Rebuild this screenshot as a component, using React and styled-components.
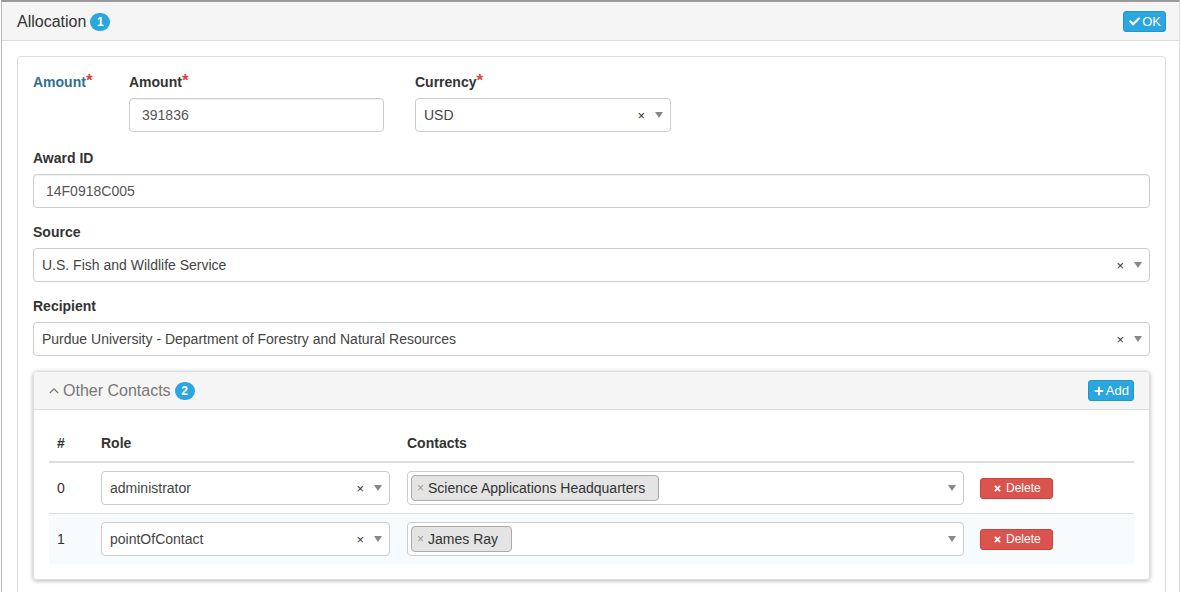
import React from "react";
import styled, { createGlobalStyle } from "styled-components";
import { FaCheck, FaPlus, FaTimes } from "react-icons/fa";

const GlobalStyle = createGlobalStyle`
  * { box-sizing: border-box; }
  body {
    margin: 0;
    background: #fff;
    font-family: "Liberation Sans", Arial, Helvetica, sans-serif;
    font-size: 14px;
    color: #333;
  }
`;

// 바깥 패널
const Panel = styled.div`
  margin-left: 1px;
  width: 1179px;
  border: 1px solid #ddd;
  border-left-color: #b8b8b8;
  border-top: 2px solid #9a9a9a;
  background: #fff;
`;

const PanelHeader = styled.div`
  display: flex;
  align-items: center;
  justify-content: space-between;
  height: 39px;
  padding: 1px 13px 0 15px;
  background: #f5f5f5;
  border-bottom: 1px solid #ddd;
`;

const Title = styled.div`
  display: flex;
  align-items: center;
  gap: 4px;
  font-size: 16px;
  color: ${(p) => (p.$muted ? "#777" : "#333")};
`;

const Badge = styled.span`
  display: inline-flex;
  align-items: center;
  justify-content: center;
  min-width: 20px;
  height: 18px;
  padding: 0 6px;
  border-radius: 10px;
  background: #2ba6de;
  color: #fff;
  font-size: 12px;
  font-weight: 700;
`;

const Button = styled.button`
  display: inline-flex;
  align-items: center;
  gap: ${(p) => (p.$danger ? "4px" : "2px")};
  height: 21px;
  padding: 0 ${(p) => (p.$danger ? "11px" : "4px")} 0 ${(p) => (p.$danger ? "12px" : "5px")};
  border-radius: 3px;
  border: 1px solid ${(p) => (p.$danger ? "#d43f3a" : "#2196c9")};
  background: ${(p) => (p.$danger ? "#d9534f" : "#2ba6de")};
  color: #fff;
  font-family: inherit;
  font-size: ${(p) => (p.$danger ? "12px" : "13px")};
  line-height: 1;
  cursor: pointer;
  svg { font-size: ${(p) => (p.$danger ? "9px" : "11px")}; }
`;

const PanelBody = styled.div`
  padding: 15px 13px 15px 15px;
`;

// 안쪽 패널
const Card = styled.div`
  border: 1px solid #ddd;
  border-radius: 4px;
  padding: 15px 15px 30px;
`;

const Row = styled.div`
  display: flex;
  gap: 31px;
  margin-bottom: 16px;
`;

const SideLabel = styled.div`
  width: 65px;
  line-height: 20px;
  font-weight: 700;
  color: #31708f;
`;

const Group = styled.div`
  width: ${(p) => p.$width || "100%"};
  margin-bottom: ${(p) => (p.$flush ? "0" : "14px")};
`;

const Label = styled.label`
  display: block;
  line-height: 20px;
  margin-bottom: 6px;
  font-weight: 700;
`;

const Req = styled.span`
  color: #e0403d;
  font-size: 17px;
  line-height: 10px;
  vertical-align: 1px;
`;

const Input = styled.div`
  height: 34px;
  display: flex;
  align-items: center;
  padding: 0 12px;
  border: 1px solid #ccc;
  border-radius: 4px;
  color: #555;
  box-shadow: inset 0 1px 1px rgba(0, 0, 0, 0.06);
`;

const SelectBox = styled.div`
  position: relative;
  display: flex;
  align-items: center;
  gap: 4px;
  width: ${(p) => p.$width || "100%"};
  height: 34px;
  padding: 0 50px 0 8px;
  border: 1px solid #ccc;
  border-radius: 4px;
  background: #fff;
  color: #444;
`;

const Clear = styled.span`
  position: absolute;
  right: 25px;
  top: 9px;
  font-size: 13px;
  color: #333;
`;

const Arrow = styled.span`
  position: absolute;
  right: 7px;
  top: 13px;
  border-left: 4px solid transparent;
  border-right: 4px solid transparent;
  border-top: 6px solid #888;
`;

const Tag = styled.span`
  display: inline-flex;
  align-items: center;
  gap: 4px;
  height: 26px;
  margin-left: -5px;
  padding: 0 13px 0 5px;
  border: 1px solid #aaa;
  border-radius: 4px;
  background: #e4e4e4;
  color: #333;
`;

const TagX = styled.span`
  color: #999;
  font-size: 12px;
`;

// 하위 패널 (Other Contacts)
const SubPanel = styled.div`
  margin-top: 15px;
  border: 1px solid #ddd;
  border-radius: 4px;
  box-shadow: 0 1px 4px rgba(0, 0, 0, 0.3);
`;

const SubHeader = styled(PanelHeader)`
  height: 38px;
  padding: 0 15px;
  border-radius: 4px 4px 0 0;
`;

const Chevron = styled.svg`
  width: 10px;
  height: 10px;
`;

const SubBody = styled.div`
  padding: 15px;
`;

const Table = styled.table`
  width: 100%;
  border-collapse: collapse;
  th {
    text-align: left;
    padding: 8px;
    line-height: 20px;
    border-bottom: 2px solid #ddd;
  }
  td {
    padding: 8px;
    vertical-align: middle;
  }
  tbody tr + tr td { border-top: 1px solid #ddd; }
  tbody tr:nth-child(even) td { background: #f7fbfd; }
`;

const Select = ({ value, width, clear = true, children }) => (
  <SelectBox $width={width}>
    {children || value}
    {clear && <Clear>×</Clear>}
    <Arrow />
  </SelectBox>
);

const contacts = [
  { role: "administrator", name: "Science Applications Headquarters" },
  { role: "pointOfContact", name: "James Ray" },
];

const App = () => {
  return (
    <>
      <GlobalStyle />
      <Panel>
        <PanelHeader>
          <Title>
            Allocation <Badge>1</Badge>
          </Title>
          <Button>
            <FaCheck /> OK
          </Button>
        </PanelHeader>
        <PanelBody>
          <Card>
            <Row>
              <SideLabel>
                Amount<Req>*</Req>
              </SideLabel>
              <Group $width="255px" $flush>
                <Label>
                  Amount<Req>*</Req>
                </Label>
                <Input>391836</Input>
              </Group>
              <Group $width="256px" $flush>
                <Label>
                  Currency<Req>*</Req>
                </Label>
                <Select value="USD" />
              </Group>
            </Row>
            <Group>
              <Label>Award ID</Label>
              <Input>14F0918C005</Input>
            </Group>
            <Group>
              <Label>Source</Label>
              <Select value="U.S. Fish and Wildlife Service" />
            </Group>
            <Group $flush>
              <Label>Recipient</Label>
              <Select value="Purdue University - Department of Forestry and Natural Resources" />
            </Group>

            <SubPanel>
              <SubHeader>
                <Title $muted>
                  <Chevron viewBox="0 0 10 10">
                    <path d="M0.8 7 L5 2.8 L9.2 7" fill="none" stroke="#777" strokeWidth="1.2" />
                  </Chevron>
                  Other Contacts <Badge>2</Badge>
                </Title>
                <Button>
                  <FaPlus style={{ fontSize: 10 }} /> Add
                </Button>
              </SubHeader>
              <SubBody>
                <Table>
                  <thead>
                    <tr>
                      <th style={{ width: 44 }}>#</th>
                      <th style={{ width: 306 }}>Role</th>
                      <th style={{ width: 573 }}>Contacts</th>
                      <th />
                    </tr>
                  </thead>
                  <tbody>
                    {contacts.map((c, i) => (
                      <tr key={c.role}>
                        <td>{i}</td>
                        <td>
                          <Select value={c.role} width="289px" />
                        </td>
                        <td>
                          <Select width="557px" clear={false}>
                            <Tag>
                              <TagX>×</TagX>
                              {c.name}
                            </Tag>
                          </Select>
                        </td>
                        <td>
                          <Button $danger>
                            <FaTimes /> Delete
                          </Button>
                        </td>
                      </tr>
                    ))}
                  </tbody>
                </Table>
              </SubBody>
            </SubPanel>
          </Card>
        </PanelBody>
      </Panel>
    </>
  );
};

export default App;
